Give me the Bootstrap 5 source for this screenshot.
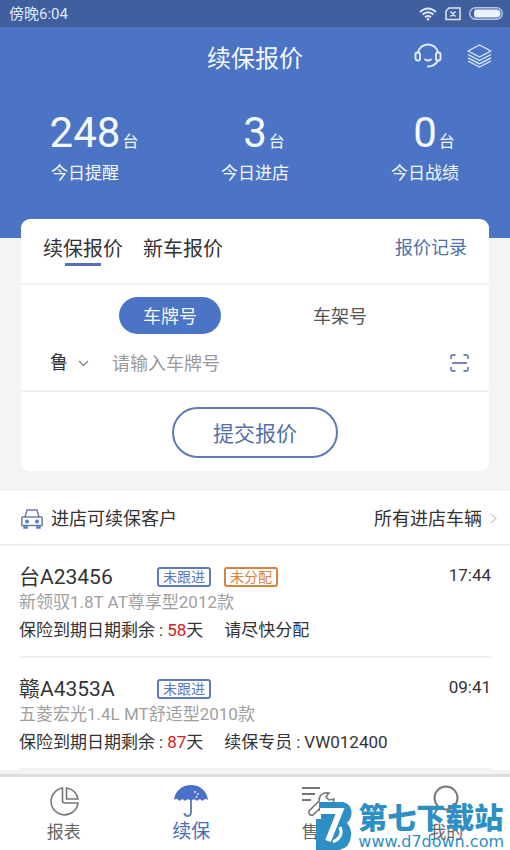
<!DOCTYPE html>
<html lang="zh-CN">
<head>
<meta charset="utf-8">
<meta name="viewport" content="width=device-width, initial-scale=1">
<title>续保报价</title>
<link href="https://cdn.jsdelivr.net/npm/bootstrap@5.3.0/dist/css/bootstrap.min.css" rel="stylesheet">
<style>
  :root { --brand: #4c74c5; --brand-dark: #3f5f9f; --ink: #333; }
  body { font-family: Roboto, "Noto Sans CJK SC", sans-serif; background: #f4f4f4; color: var(--ink); font-size: 17px; line-height: 24px; }
  button { font: inherit; color: inherit; }
  svg { display: block; flex: none; }
  .statusbar { background: var(--brand-dark); height: 27px; font-size: 15px; color: #dfe7f8; padding: 0 7px 0 9px; }
  .hero { background: var(--brand); color: #f4f8ff; height: 211px; }
  .titlebar { height: 58px; padding: 0 18px; }
  .titlebar h1 { font-size: 24px; line-height: 32px; font-weight: 400; padding-top: 5px; }
  .tools { gap: 25px; }
  .stats { padding-top: 24px; }
  .stat-num { font-size: 42px; line-height: 48px; }
  .stat-unit { font-size: 16px; margin-left: 2px; margin-right: -18px; }
  .stat-label { line-height: 24px; margin-top: -5px; }
  .quote { margin: -19px 21px 0; border-radius: 9px; background: #fff; }
  .quote-tabs { height: 66px; padding: 0 22px; gap: 20px; border-bottom: 2px solid #f1f1f1; }
  .quote-tabs button { font-size: 20px; line-height: 28px; padding: 16px 0 3px; color: var(--ink); }
  .tab-on::after { content: ""; display: block; width: 36px; height: 3px; margin: 0 auto; background: #5570b4; }
  .quote-tabs a { font-size: 18px; line-height: 28px; padding-top: 15px; color: #4e6fa8; }
  .modes { padding-top: 12px; }
  .mode-cell { width: 170px; }
  .mode-cell button { font-size: 18px; line-height: 35px; padding: 2px 24px 0; border-radius: 19px; color: #555; }
  .mode-cell .mode-on { background: var(--brand); color: #f4f8ff; }
  .plate { height: 58px; padding: 2px 20px 0 29px; border-bottom: 2px solid #f1f1f1; font-size: 18px; }
  .plate select { appearance: none; border: 0; background: none; padding: 0; width: 28px; height: 30px; line-height: 30px; color: var(--ink); }
  .plate input { border: 0; outline: 0; background: none; padding: 0; height: 30px; min-width: 0; margin-left: 23px; }
  .plate input::placeholder { color: #999; opacity: 1; }
  .submit-wrap { padding: 15px 0 13px; }
  .submit-btn { border: 2px solid #5f7bb0; border-radius: 26px; font-size: 21px; line-height: 44px; padding: 3px 39px 0; color: #536fa5; background: #fff; }
  .clients { margin-top: 20px; background: #fff; }
  .clients-head { height: 55px; padding: 2px 13px 0 21px; border-bottom: 2px solid #f1f1f1; font-size: 18px; }
  .clients-head h2 { font-size: 18px; font-weight: 400; }
  .client { margin: 0 19px; height: 112px; padding-top: 18px; border-bottom: 2px solid #f1f1f1; }
  .client time { line-height: 22px; }
  .plate-no { font-size: 21px; line-height: 26px; width: 138px; }
  .tag { font-size: 14px; line-height: 16px; border: 2px solid; border-radius: 3px; padding: 0 4px; margin-right: 13px; }
  .tag-blue { color: #5b7cb8; } .tag-orange { color: #d58340; }
  .model { color: #a0a0a0; line-height: 24px; }
  .expiry { line-height: 24px; margin-top: 4px; }
  .days { color: #d42020; }
  .note { margin-left: 21px; }
  .tabbar { background: #fff; border-top: 3px solid #dedede; height: 76px; margin-top: 4px; }
  .tabbar a { color: #666; padding-top: 7px; }
  .tabbar .here { color: #4b6db5; font-size: 19px; }
  .tabbar .tab-text { line-height: 24px; margin-top: 2px; }
  .watermark { right: 6px; bottom: 0; color: #2d8fc4; gap: 6px; pointer-events: none; }
  .mark-name { font-size: 29px; line-height: 29px; font-weight: 900; }
  .mark-url { font: 16px/16px "DejaVu Sans", sans-serif; }
</style>
<script src="https://cdn.jsdelivr.net/npm/bootstrap@5.3.0/dist/js/bootstrap.bundle.min.js"></script>
</head>
<body>
<div class="d-flex flex-column min-vh-100 position-relative overflow-hidden">
  <div class="statusbar d-flex align-items-center justify-content-between">
    <span>傍晚6:04</span>
    <div class="d-flex align-items-center gap-2">
      <svg width="18" height="14" viewBox="0 0 18 14" fill="none" stroke="#dfe7f8" stroke-width="2"><path d="M1 5Q9-2 17 5M3.500 7.600Q9 3 14.500 7.600M6 10.200Q9 7.800 12 10.200"/><circle cx="9" cy="12.300" r="1.200" fill="#dfe7f8" stroke="none"/></svg>
      <svg width="16" height="14" viewBox="0 0 16 14" fill="none" stroke="#dfe7f8" stroke-width="1.500"><path d="M4 1H15V12.500H1V4ZM5.500 4.500L10.500 9.500M10.500 4.500L5.500 9.500"/></svg>
      <svg width="34" height="13" viewBox="0 0 34 13"><rect x=".7" y=".7" width="32.600" height="11.600" rx="5.800" fill="none" stroke="#b9c8e8" stroke-width="1.400"/><path d="M6 2.500H28Q31.500 3 31.500 6.500T28 10.500H6Q4 6.500 6 2.500Z" fill="#edf2ff"/></svg>
    </div>
  </div>

  <header class="hero">
    <div class="titlebar row g-0 align-items-center">
      <div class="col"></div>
      <h1 class="col-auto m-0">续保报价</h1>
      <div class="tools col d-flex justify-content-end align-items-center">
        <button class="btn p-0 border-0" aria-label="客服"><svg width="28" height="26" viewBox="0 0 28 26" fill="none" stroke="#e4ecfb" stroke-width="1.900" stroke-linecap="round"><path d="M4 9.500C5 5 9 1.500 14 1.500S23 5 24 9.500M24 17.500C22 21 19 23.500 14 23.500M11 16.500Q14 18.500 17 16.500"/><rect x="1.500" y="9.500" width="4.500" height="8" rx="2"/><rect x="22" y="9.500" width="4.500" height="8" rx="2"/></svg></button>
        <button class="btn p-0 border-0" aria-label="图层"><svg width="25" height="24" viewBox="0 0 25 24" fill="none" stroke="#dfe8fa" stroke-width="1.400" stroke-linejoin="round"><path d="M12.500 1L24 7L12.500 13L1 7ZM1 10.500L12.500 16.500L24 10.500M1 13.800L12.500 19.800L24 13.800M1 17L12.500 23L24 17"/></svg></button>
      </div>
    </div>
    <div class="stats row g-0 text-center">
      <div class="col"><div class="stat-num">248<span class="stat-unit">台</span></div><div class="stat-label">今日提醒</div></div>
      <div class="col"><div class="stat-num">3<span class="stat-unit">台</span></div><div class="stat-label">今日进店</div></div>
      <div class="col"><div class="stat-num">0<span class="stat-unit">台</span></div><div class="stat-label">今日战绩</div></div>
    </div>
  </header>

  <form class="quote" onsubmit="return false">
    <div class="quote-tabs d-flex align-items-start">
      <button type="button" class="btn border-0 rounded-0 tab-on">续保报价</button>
      <button type="button" class="btn border-0 rounded-0">新车报价</button>
      <a href="#" class="ms-auto text-decoration-none">报价记录</a>
    </div>
    <div class="modes d-flex justify-content-center">
      <div class="mode-cell text-center"><button type="button" class="btn border-0 mode-on">车牌号</button></div>
      <div class="mode-cell text-center"><button type="button" class="btn border-0">车架号</button></div>
    </div>
    <div class="plate d-flex align-items-center">
      <select id="province" aria-label="省份"><option>鲁</option></select>
      <svg width="11" height="7" viewBox="0 0 11 7" fill="none" stroke="#888" stroke-width="1.400"><path d="M1 1L5.500 5.500L10 1"/></svg>
      <input id="plateno" type="text" class="flex-grow-1" aria-label="车牌号" placeholder="请输入车牌号">
      <button type="button" class="btn p-0 border-0" aria-label="扫描"><svg width="19" height="18" viewBox="0 0 19 18" fill="none" stroke="#7588ae" stroke-width="1.800"><path d="M1 5V3Q1 1 3 1H5.500M13.500 1H16Q18 1 18 3V5M18 13V15Q18 17 16 17H13.500M5.500 17H3Q1 17 1 15V13M2 9H17"/></svg></button>
    </div>
    <div class="submit-wrap text-center"><button class="submit-btn">提交报价</button></div>
  </form>

  <section class="clients">
    <div class="clients-head d-flex align-items-center">
      <svg width="22" height="20" viewBox="0 0 22 20" fill="none" stroke="#6c7d9c" stroke-width="1.500"><path d="M4 8L6 1H16L18 8M1.500 8H20.500Q21.200 8 21.200 9V16.500H.8V9Q.8 8 1.500 8Z"/><path d="M3 17V19H6V17M16 17V19H19V17" fill="#4c74c5" stroke="#5c80c5"/><circle cx="6" cy="12.500" r="2" fill="#4c80d0" stroke="none"/><circle cx="16" cy="12.500" r="2" fill="#4c80d0" stroke="none"/></svg>
      <h2 class="m-0 ms-2">进店可续保客户</h2>
      <a href="#" class="ms-auto d-flex align-items-center gap-2 text-reset text-decoration-none">所有进店车辆
        <svg width="7" height="11" viewBox="0 0 7 11" fill="none" stroke="#ccc" stroke-width="1.300"><path d="M1 1L6 5.500L1 10"/></svg></a>
    </div>
    <article class="client">
      <div class="d-flex align-items-center">
        <span class="plate-no">台A23456</span><span class="tag tag-blue">未跟进</span><span class="tag tag-orange">未分配</span><time class="ms-auto align-self-start">17:44</time>
      </div>
      <div class="model">新领驭1.8T AT尊享型2012款</div>
      <div class="expiry">保险到期日期剩余<span class="mx-1">:</span><span class="days">58</span>天<span class="note">请尽快分配</span></div>
    </article>
    <article class="client">
      <div class="d-flex align-items-center">
        <span class="plate-no">赣A4353A</span><span class="tag tag-blue">未跟进</span><time class="ms-auto align-self-start">09:41</time>
      </div>
      <div class="model">五菱宏光1.4L MT舒适型2010款</div>
      <div class="expiry">保险到期日期剩余<span class="mx-1">:</span><span class="days">87</span>天<span class="note">续保专员<span class="mx-1">:</span>VW012400</span></div>
    </article>
  </section>

  <nav class="tabbar row g-0 text-center">
    <a href="#" class="col text-decoration-none">
      <svg class="mx-auto" width="32" height="34" viewBox="0 0 32 34" fill="none" stroke="#777" stroke-width="1.600"><path d="M14.500 4A13.500 13.500 0 1 0 30 19H17Q14.500 19 14.500 16.500ZM18.500 4V15H30A13 13 0 0 0 18.500 4Z"/></svg>
      <div class="tab-text">报表</div></a>
    <a href="#" class="col here text-decoration-none">
      <svg class="mx-auto" width="36" height="34" viewBox="0 0 36 34"><path d="M1 16C2 7 9 1 18 1S34 7 35 16Q32 13.500 29.500 17Q26.500 13.500 24 17Q21 13.500 18 17Q15 13.500 12 17Q9.500 13.500 6.500 17Q4 13.500 1 16Z" fill="#4c70c8"/><path d="M18 16V28Q18 32 14.500 32Q11.500 32 11.500 29" fill="none" stroke="#6684be" stroke-width="2"/><path d="M22 7V9M25 9V11M23.500 12V14" stroke="#dce7ff" stroke-width="1.500"/></svg>
      <div class="tab-text">续保</div></a>
    <a href="#" class="col text-decoration-none">
      <svg class="mx-auto" width="36" height="34" viewBox="0 0 36 34" fill="none" stroke="#777" stroke-width="2"><path d="M1 4H19M1 10H14M1 16H10"/><path d="M33 15L28 16L25 13L28 9Q18 8 18 17L8 27Q7 32 12 31L21 22Q32 24 33 15Z" stroke-width="1.600"/></svg>
      <div class="tab-text">售后</div></a>
    <a href="#" class="col text-decoration-none">
      <svg class="mx-auto" width="36" height="34" viewBox="0 0 36 34" fill="none" stroke="#777" stroke-width="2"><circle cx="18" cy="14" r="11.500"/><path d="M6 33Q7 25 13 23.500M30 33Q29 25 23 23.500"/></svg>
      <div class="tab-text">我的</div></a>
  </nav>

  <div class="watermark position-absolute d-flex align-items-end">
    <svg width="36" height="48" viewBox="0 0 36 48"><path d="M3 0H27Q36 2 35.500 12Q35 17 31 21Q36 27 35 34Q34 46 23 48H0V17H5V9H3Z" fill="#2d8fc4"/><path d="M4 9H24L12 39" fill="none" stroke="#fff" stroke-width="6"/><path d="M24 25Q28 35 17 40" fill="none" stroke="#fff" stroke-width="3"/></svg>
    <div><div class="mark-name">第七下载站</div><div class="mark-url">www.d7down.com</div></div>
  </div>
</div>
</body>
</html>
